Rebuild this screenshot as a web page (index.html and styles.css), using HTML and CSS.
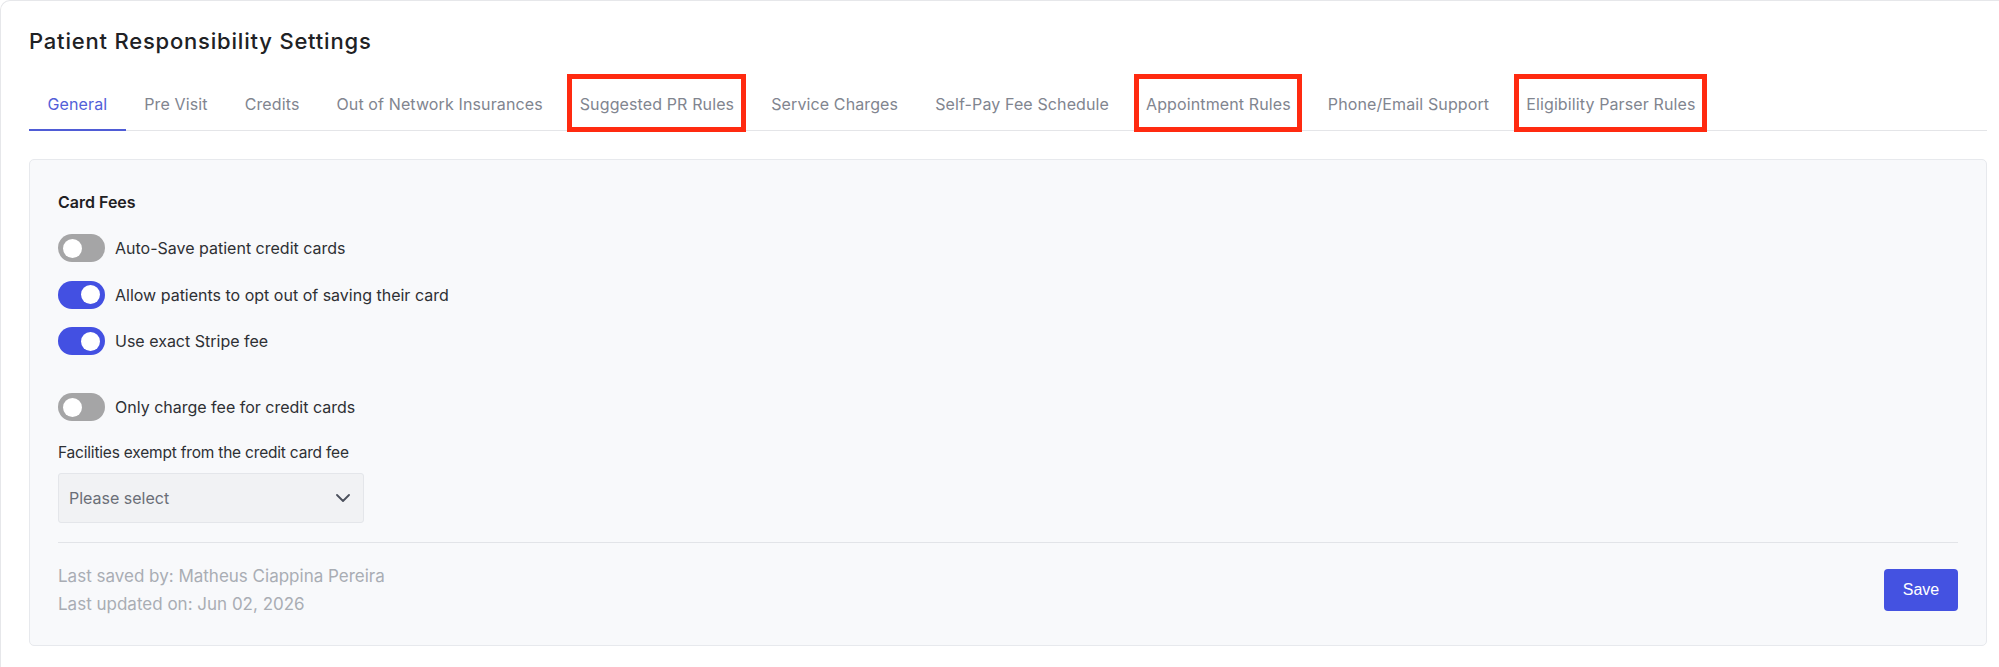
FILE: index.html
```html
<!DOCTYPE html>
<html lang="en">
<head>
<meta charset="utf-8">
<title>Patient Responsibility Settings</title>
<link rel="stylesheet" href="styles.css">
</head>
<body>
<div class="page">
  <h1 class="page-title">Patient Responsibility Settings</h1>

  <nav class="tabs">
    <a class="tab is-active">General</a>
    <a class="tab">Pre Visit</a>
    <a class="tab">Credits</a>
    <a class="tab">Out of Network Insurances</a>
    <a class="tab is-flagged">Suggested PR Rules</a>
    <a class="tab">Service Charges</a>
    <a class="tab">Self-Pay Fee Schedule</a>
    <a class="tab is-flagged">Appointment Rules</a>
    <a class="tab">Phone/Email Support</a>
    <a class="tab is-flagged">Eligibility Parser Rules</a>
  </nav>

  <section class="panel">
    <h2 class="panel-heading">Card Fees</h2>

    <div class="toggle-group">
      <label class="toggle-row">
        <span class="switch"></span>
        <span class="toggle-label">Auto-Save patient credit cards</span>
      </label>
      <label class="toggle-row">
        <span class="switch is-on"></span>
        <span class="toggle-label">Allow patients to opt out of saving their card</span>
      </label>
      <label class="toggle-row">
        <span class="switch is-on"></span>
        <span class="toggle-label">Use exact Stripe fee</span>
      </label>
    </div>

    <label class="toggle-row toggle-row-spaced">
      <span class="switch"></span>
      <span class="toggle-label">Only charge fee for credit cards</span>
    </label>

    <div class="field">
      <span class="field-label">Facilities exempt from the credit card fee</span>
      <div class="select">
        <span class="select-placeholder">Please select</span>
        <svg class="select-chevron" width="14" height="8" viewBox="0 0 14 8" fill="none">
          <path d="M1 1l6 6 6-6" stroke="#4b505c" stroke-width="1.8" stroke-linecap="round" stroke-linejoin="round"/>
        </svg>
      </div>
    </div>

    <footer class="panel-footer">
      <div class="audit">
        <p>Last saved by: Matheus Ciappina Pereira</p>
        <p>Last updated on: Jun 02, 2026</p>
      </div>
      <button class="btn-save" type="button">Save</button>
    </footer>
  </section>
</div>
</body>
</html>
```

FILE: styles.css
```css
* {
  box-sizing: border-box;
}

html, body {
  margin: 0;
  background: #ffffff;
}

body {
  font-family: Inter, "Noto Sans", sans-serif;
  color: #2b2d31;
  overflow: hidden;
}

.page {
  min-height: 700px;
  border-top: 1px solid #e6e7ea;
  border-left: 1px solid #e6e7ea;
  border-top-left-radius: 10px;
  padding: 25px 12px 0 28px;
}

.page-title {
  margin: 0;
  font-size: 22px;
  line-height: 30px;
  font-weight: 500;
  color: #202124;
  letter-spacing: 0.8px;
}

/* tab strip */
.tabs {
  display: flex;
  margin-top: 24px;
  border-bottom: 1px solid #e4e5e8;
}

.tab {
  position: relative;
  padding: 12px 18.5px 13px;
  margin-bottom: -1px;
  font-size: 16px;
  line-height: 24px;
  letter-spacing: 0.12px;
  color: #81858f;
  border-bottom: 2px solid transparent;
  cursor: pointer;
  white-space: nowrap;
}

.tab.is-active {
  color: #5260d8;
  border-bottom-color: #4f5cd6;
}

.tab.is-flagged::after {
  content: "";
  position: absolute;
  top: -6px;
  bottom: -3px;
  left: 6px;
  right: 7px;
  border: 5px solid #ff2a10;
  pointer-events: none;
}

/* settings panel */
.panel {
  margin-top: 28px;
  background: #f8f9fb;
  border: 1px solid #e7e9ed;
  border-radius: 5px;
  padding: 30px 28px 27px 28px;
}

.panel-heading {
  margin: 0;
  font-size: 16px;
  line-height: 24px;
  font-weight: 600;
  color: #1f2023;
}

.toggle-group {
  display: flex;
  flex-direction: column;
  gap: 18.5px;
  margin-top: 20px;
}

.toggle-row {
  display: flex;
  align-items: center;
  gap: 10px;
  height: 28px;
}

.toggle-row-spaced {
  margin-top: 38px;
}

.toggle-label {
  font-size: 16px;
  color: #2e3034;
}

.switch {
  position: relative;
  flex: none;
  width: 47px;
  height: 28px;
  border-radius: 14px;
  background: #a5a5a6;
}

.switch::after {
  content: "";
  position: absolute;
  top: 4.5px;
  left: 5px;
  width: 19px;
  height: 19px;
  border-radius: 50%;
  background: #ffffff;
}

.switch.is-on {
  background: #4350e2;
}

.switch.is-on::after {
  left: 23px;
}

/* facility select */
.field {
  margin-top: 20px;
}

.field-label {
  display: block;
  font-size: 15.5px;
  line-height: 24px;
  letter-spacing: -0.2px;
  color: #2e3034;
}

.select {
  display: flex;
  align-items: center;
  justify-content: space-between;
  width: 306px;
  height: 50px;
  margin-top: 8px;
  padding: 0 13px 0 10px;
  background: #f1f2f4;
  border: 1px solid #e4e6ea;
  border-radius: 3px;
}

.select-placeholder {
  font-size: 16px;
  color: #6a6e77;
}

.select-chevron {
  display: block;
}

/* footer with audit info and save */
.panel-footer {
  display: flex;
  align-items: center;
  justify-content: space-between;
  margin-top: 19px;
  padding-top: 19px;
  border-top: 1px solid #e2e4e8;
}

.audit p {
  margin: 0;
  font-size: 17px;
  line-height: 28px;
  color: #a9adb4;
}

.btn-save {
  width: 74px;
  height: 42px;
  border: none;
  border-radius: 4px;
  background: #4452e1;
  color: #ffffff;
  font-family: "Liberation Sans", Arial, sans-serif;
  font-size: 16px;
  cursor: pointer;
}
```
